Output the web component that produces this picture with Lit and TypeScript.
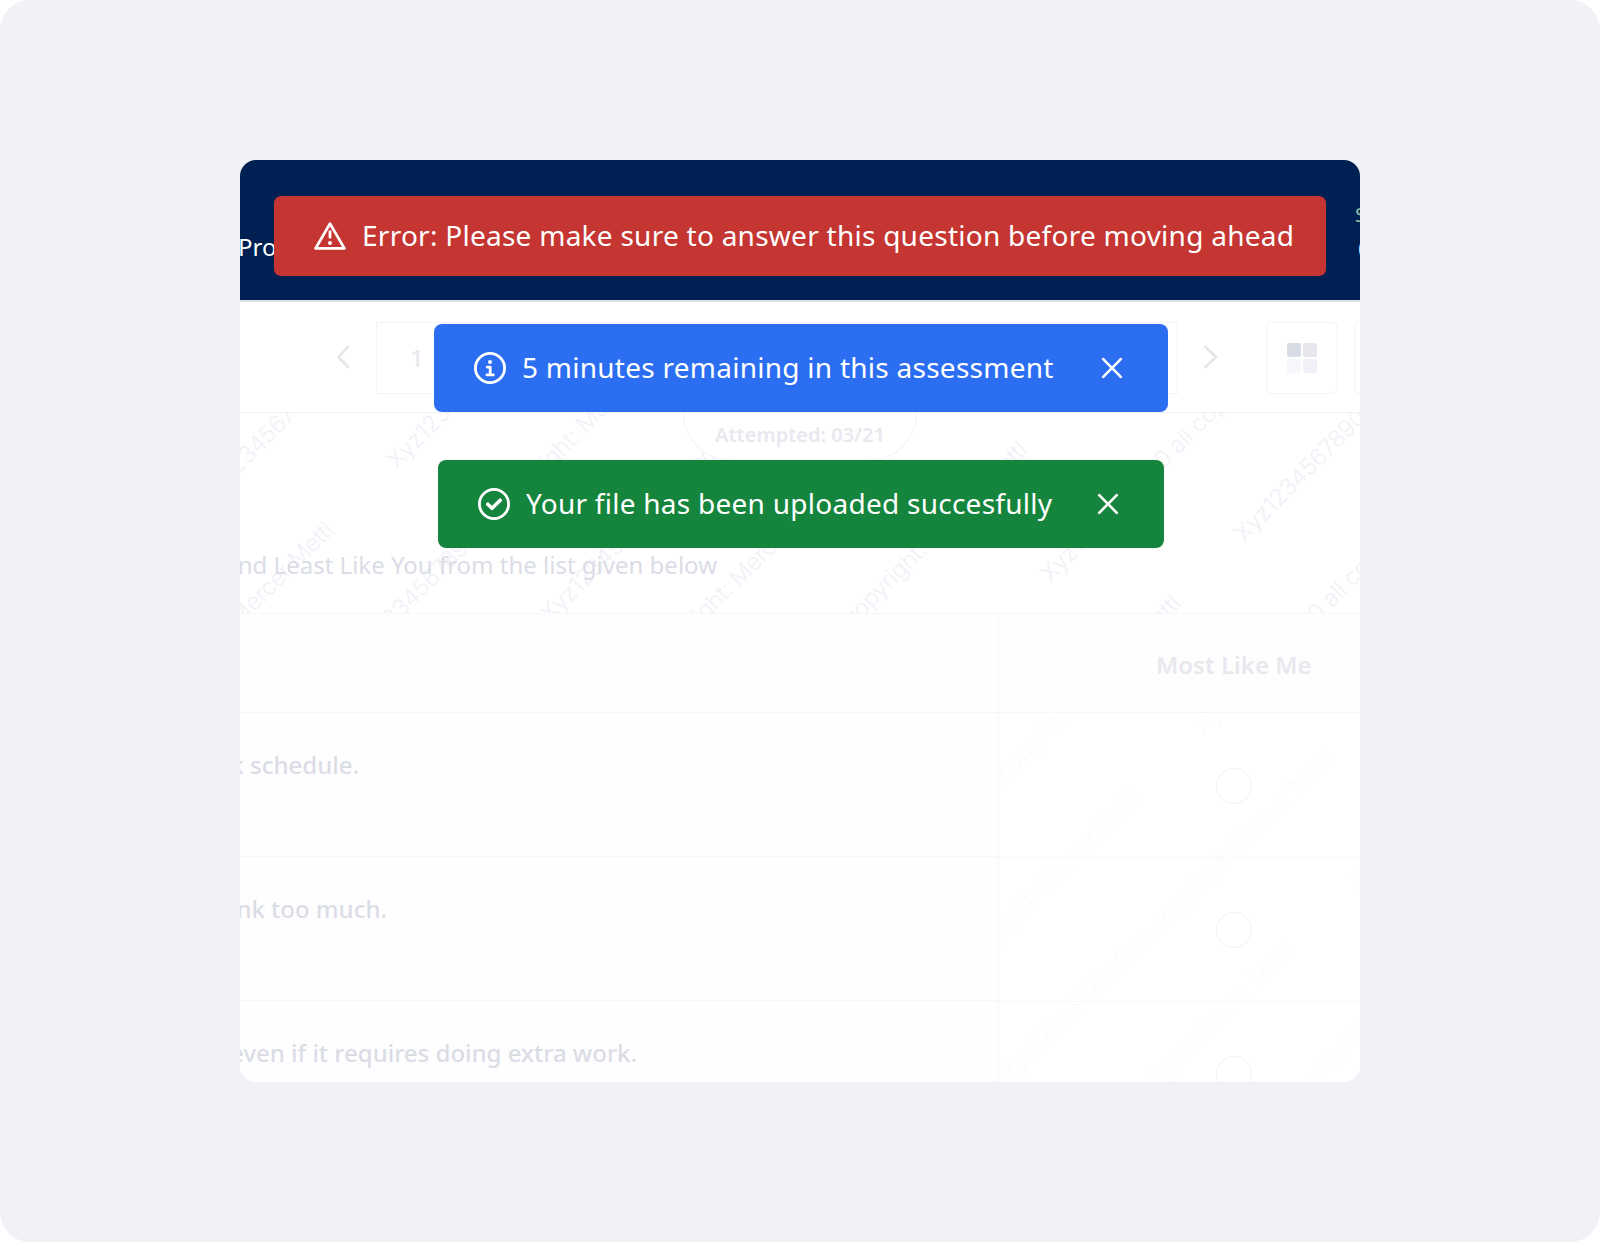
import { LitElement, html, svg, css } from 'lit';
import { customElement, property } from 'lit/decorators.js';

const WATERMARK = 'Xyz1234567890 all copyright: Mercer Mettl';

const icons = {
  error: svg`
    <path d="M16 3.6 30.4 28.4H1.6Z" />
    <path d="M16 11.6v5.6" />
    <circle class="dot" cx="16" cy="23" r="2" />`,
  info: svg`
    <circle cx="16" cy="16" r="14.6" />
    <circle class="dot" cx="16" cy="10" r="2" />
    <path d="M13.3 15.2h2.9v7.4M12.9 22.9h6.4" />`,
  success: svg`
    <circle cx="16" cy="16" r="14.6" />
    <path class="tick" d="m9.8 16.2 4.2 4.1 8.2-8.1" />`,
};

@customElement('toast-message')
export class ToastMessage extends LitElement {
  @property() type: keyof typeof icons = 'info';
  @property({ type: Boolean }) closable = false;

  static styles = css`
    :host {
      display: block;
    }

    .toast {
      display: flex;
      align-items: center;
      box-sizing: border-box;
      height: 88px;
      padding: 0 40px;
      border-radius: 8px;
      color: #fff;
      font-size: 28px;
      letter-spacing: 0.26px;
      line-height: 40px;
      white-space: nowrap;
    }

    .error {
      width: 1052px;
      height: 80px;
      padding-right: 0;
      border-radius: 7px;
      background: #c53532;
    }

    .info {
      width: 734px;
      margin-left: 2px;
      background: #2b6ef2;
    }

    .success {
      width: 726px;
      margin-left: 2px;
      background: #15853d;
    }

    .text {
      padding-bottom: 2px;
    }

    .icon {
      width: 32px;
      height: 32px;
      margin-right: 16px;
      flex: none;
      fill: none;
      stroke: #fff;
      stroke-width: 2.8;
      stroke-linecap: round;
      stroke-linejoin: round;
    }

    .dot {
      fill: #fff;
      stroke: none;
    }

    .tick {
      stroke-width: 3.6;
    }

    .close {
      width: 32px;
      height: 32px;
      margin-left: auto;
      padding: 0;
      border: none;
      background: none;
    }

    .close svg {
      display: block;
      stroke: #fff;
      stroke-width: 2.6;
      stroke-linecap: round;
    }
  `;

  render() {
    return html`
      <div class="toast ${this.type}">
        <svg class="icon" viewBox="0 0 32 32">${icons[this.type]}</svg>
        <span class="text"><slot></slot></span>
        ${this.closable
          ? html`<button class="close" aria-label="Close" @click=${this._close}>
              <svg width="32" height="32" viewBox="0 0 32 32"><path d="m7.2 7.2 17.6 17.6m0-17.6L7.2 24.8" /></svg>
            </button>`
          : ''}
      </div>
    `;
  }

  _close() {
    this.remove();
  }
}

@customElement('watermark-layer')
export class WatermarkLayer extends LitElement {
  @property({ type: Number }) left = 0;
  @property({ type: Number }) top = 0;
  @property({ type: Number }) width = 0;
  @property({ type: Number }) height = 0;

  static styles = css`
    :host {
      position: absolute;
      inset: 0;
      overflow: hidden;
    }

    svg {
      display: block;
      width: 100%;
      height: 100%;
      font-family: Inter, 'Liberation Sans', sans-serif;
      font-size: 23.5px;
      font-weight: 300;
      fill: #f1f1f8;
    }
  `;

  // Diagonals are 153.4px apart, every other one starts 234px later.
  render() {
    const marks = [];
    for (let i = -1; i < 12; i++) {
      const sum = 713 + i * 153.4;
      const start = i % 2 === 0 ? -307 : -73;
      for (let k = -1; k < 2; k++) {
        const diff = start + k * 774;
        const x = (sum + diff) / 2 - this.left;
        const y = (sum - diff) / 2 - this.top;
        // a mark runs 325px right and up from its start
        if (x > this.width || x < -325 || y < 0 || y > this.height + 325) continue;
        marks.push(svg`<text transform="translate(${x} ${y}) rotate(-45)" textLength="460">${WATERMARK}</text>`);
      }
    }
    return html`<svg>${marks}</svg>`;
  }
}

@customElement('app-root')
export class AppRoot extends LitElement {
  static styles = css`
    :host {
      display: block;
      font-family: 'Noto Sans', 'Open Sans', sans-serif;
    }

    .page {
      box-sizing: border-box;
      width: 1600px;
      height: 1242px;
      padding: 160px 240px;
      border-radius: 30px;
      background: #f0f2f8;
    }

    .card {
      position: relative;
      width: 1120px;
      height: 922px;
      overflow: hidden;
      border-radius: 16px;
      background: #fff;
      white-space: nowrap;
    }

    .header {
      display: flex;
      justify-content: space-between;
      box-sizing: border-box;
      height: 142px;
      border-bottom: 2px solid #dcdde8;
      background: #001f52;
      color: #fff;
      font-size: 24px;
    }

    .product {
      margin: 71px 0 0 -2px;
      line-height: 32px;
    }

    .timer {
      width: 5px;
      margin-top: 39px;
      line-height: 32px;
    }

    .timer-label {
      height: 34px;
      color: #8fc3a4;
      font-size: 20px;
    }

    .timer-value {
      padding-left: 3px;
    }

    .toolbar {
      display: flex;
      align-items: center;
      box-sizing: border-box;
      height: 111px;
      padding: 2px 0 0 91px;
      border-bottom: 1px solid #f0f0f8;
    }

    .chevron {
      flex: none;
      width: 24px;
      height: 24px;
      margin-bottom: 2px;
      fill: none;
      stroke: #e6e6eb;
      stroke-width: 2.8;
      stroke-linecap: round;
      stroke-linejoin: round;
    }

    .pages {
      display: flex;
      align-items: center;
      box-sizing: border-box;
      flex: none;
      width: 802px;
      height: 72px;
      margin: 0 20px 0 21px;
      padding: 0 0 1px 33px;
      border: 1.5px solid #f3f3f9;
      color: #e8e8ee;
      font-size: 24px;
      font-weight: 500;
    }

    .tool {
      display: flex;
      align-items: center;
      justify-content: center;
      box-sizing: border-box;
      flex: none;
      width: 72px;
      height: 72px;
      border: 1.5px solid #f3f3f9;
      border-radius: 6px;
    }

    .tool + .tool {
      margin-left: 16px;
    }

    .tool.first {
      margin-left: 44px;
    }

    .tiles {
      display: grid;
      grid-template-columns: 14px 14px;
      gap: 2px;
    }

    .tile {
      height: 14px;
      border-radius: 2px;
      background: #f0f2f8;
    }

    .tile.a {
      background: #d8dce5;
    }

    .tile.b {
      background: #e6e6ec;
    }

    .tile.c {
      background: #f6f7fb;
    }

    .intro {
      position: relative;
      display: flex;
      flex-direction: column;
      height: 200px;
    }

    .attempted {
      position: relative;
      box-sizing: border-box;
      width: 234px;
      height: 48px;
      margin-left: 443px;
      padding-top: 8px;
      border: 1px solid #f2f2f8;
      border-top: none;
      border-radius: 0 0 48px 48px;
      background: #fff;
      color: #e8e8ee;
      font-size: 20px;
      font-weight: 600;
      line-height: 28px;
      text-align: center;
    }

    .question {
      position: relative;
      display: flex;
      justify-content: flex-end;
      width: 477px;
      margin-top: 88px;
      color: #dadde6;
      font-size: 24px;
      line-height: 32px;
    }

    .table {
      display: grid;
      grid-template-columns: 758px 1fr;
      height: 469px;
      border-top: 1px solid #f6f7fb;
    }

    .column {
      position: relative;
      box-sizing: border-box;
      background: #fefeff;
    }

    .column.answers {
      border-left: 1px solid #f7f7fb;
      background: #fff;
    }

    .faint {
      opacity: 0.14;
    }

    .head,
    .row {
      position: relative;
      display: flex;
      box-sizing: border-box;
      border-bottom: 1px solid #f6f7fb;
    }

    .head {
      height: 99px;
    }

    .answers .head {
      padding: 35px 0 0 157px;
      background: #fefeff;
      color: #e8e8ed;
      font-size: 24px;
      font-weight: 600;
      line-height: 32px;
    }

    .row {
      height: 144px;
      color: #dadde6;
      font-size: 24px;
      font-weight: 500;
      line-height: 32px;
    }

    .answers .head + .row {
      height: 145px;
    }

    .statement {
      display: flex;
      justify-content: flex-end;
      padding-top: 36px;
    }

    .radio {
      box-sizing: border-box;
      width: 36px;
      height: 36px;
      margin: 55px 0 0 217px;
      border: 1px solid #f1f1f8;
      border-radius: 50%;
      background: #fff;
    }

    .row + .row .radio {
      margin-top: 54px;
    }

    .toasts {
      position: absolute;
      top: 36px;
      left: 0;
      width: 1120px;
      display: flex;
      flex-direction: column;
      align-items: center;
      gap: 48px;
    }
  `;

  statements = [
    { text: 'work schedule.', width: 119 },
    { text: 'think too much.', width: 147 },
    { text: 'even if it requires doing extra work.', width: 397 },
  ];

  render() {
    return html`
      <div class="page">
        <div class="card">
          <div class="header">
            <div class="product">Pro</div>
            <div class="timer">
              <div class="timer-label">S</div>
              <div class="timer-value">0</div>
            </div>
          </div>
          <div class="toolbar">
            <svg class="chevron" viewBox="0 0 24 24"><path d="M17 2 7.5 12l9.5 10" /></svg>
            <div class="pages">1</div>
            <svg class="chevron" viewBox="0 0 24 24"><path d="M7.5 2 18 12 7.5 22" /></svg>
            <div class="tool first">
              <div class="tiles">
                <div class="tile a"></div>
                <div class="tile b"></div>
                <div class="tile c"></div>
                <div class="tile"></div>
              </div>
            </div>
            <div class="tool"></div>
          </div>
          <div class="intro">
            <watermark-layer left="240" top="413" width="1120" height="200"></watermark-layer>
            <div class="attempted">Attempted: 03/21</div>
            <div class="question">and Least Like You from the list given below</div>
          </div>
          <div class="table">
            <div class="column">
              <div class="head"></div>
              ${this.statements.map(
                (s) => html`
                  <div class="row">
                    <div class="statement" style="width: ${s.width}px">${s.text}</div>
                  </div>
                `
              )}
            </div>
            <div class="column answers">
              <watermark-layer class="faint" left="999" top="614" width="361" height="468"></watermark-layer>
              <div class="head">Most Like Me</div>
              ${this.statements.map(() => html`<div class="row"><div class="radio"></div></div>`)}
            </div>
          </div>
          <div class="toasts">
            <toast-message type="error">Error: Please make sure to answer this question before moving ahead</toast-message>
            <toast-message type="info" closable>5 minutes remaining in this assessment</toast-message>
            <toast-message type="success" closable>Your file has been uploaded succesfully</toast-message>
          </div>
        </div>
      </div>
    `;
  }
}
